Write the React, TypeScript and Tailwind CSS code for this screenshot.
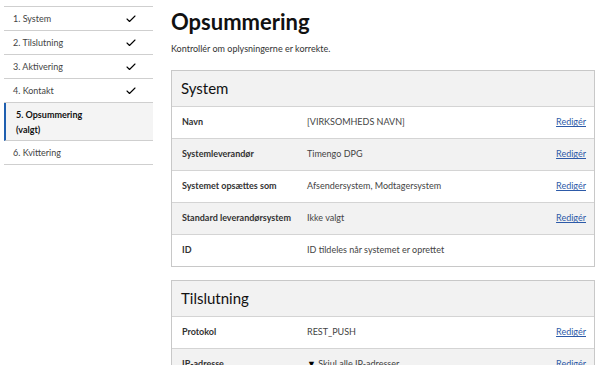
import { Check } from "lucide-react";

const steps = [
  { label: "1. System", done: true },
  { label: "2. Tilslutning", done: true },
  { label: "3. Aktivering", done: true },
  { label: "4. Kontakt", done: true },
];

const systemRows = [
  { label: "Navn", value: "[VIRKSOMHEDS NAVN]", edit: true },
  { label: "Systemleverandør", value: "Timengo DPG", edit: true },
  { label: "Systemet opsættes som", value: "Afsendersystem, Modtagersystem", edit: true },
  { label: "Standard leverandørsystem", value: "Ikke valgt", edit: true },
  { label: "ID", value: "ID tildeles når systemet er oprettet", edit: false },
];

function Row({
  label,
  children,
  edit,
  shaded,
}: {
  label: string;
  children: React.ReactNode;
  edit: boolean;
  shaded: boolean;
}) {
  return (
    <div
      className={`flex h-[32px] items-center border-t border-[#d4d4d4] pl-[10px] pr-[8px] text-[9px] ${
        shaded ? "bg-[#f2f2f2]" : "bg-white"
      }`}
    >
      <div className="w-[125px] whitespace-nowrap font-bold text-[#333]">{label}</div>
      <div className="flex-1 whitespace-nowrap text-[#444]">{children}</div>
      {edit && <a className="text-[#2d5aa8] underline">Redigér</a>}
    </div>
  );
}

export default function App() {
  return (
    <div className="flex min-h-screen bg-white font-['Lato',sans-serif] text-[#222]">
      <nav className="ml-[4px] mt-[6px] w-[149px] shrink-0 border-t border-[#cfcfcf]">
        {steps.map((s) => (
          <div
            key={s.label}
            className="flex h-[24px] items-center justify-between border-b border-[#cfcfcf] pl-[9px] pr-[16px] text-[9px] text-[#444]"
          >
            <span>{s.label}</span>
            <Check className="h-[12px] w-[12px] text-black" strokeWidth={2.2} />
          </div>
        ))}
        <div className="flex h-[38px] flex-col justify-center border-b border-l-2 border-[#cfcfcf] border-l-[#1f5fb0] bg-[#f4f4f4] pl-[10px] text-[9px] font-bold leading-[15px] text-[#111]">
          <span>5. Opsummering</span>
          <span>(valgt)</span>
        </div>
        <div className="flex h-[24px] items-center border-b border-[#cfcfcf] pl-[9px] text-[9px] text-[#444]">
          6. Kvittering
        </div>
      </nav>

      <main className="ml-[18px] w-[424px]">
        <h1 className="mt-[8px] text-[22px] font-bold leading-[28px] text-[#111]">
          Opsummering
        </h1>
        <p className="mt-[6px] text-[9px] text-[#333]">
          Kontrollér om oplysningerne er korrekte.
        </p>

        <section className="mt-[14px] border border-[#c8c8c8]">
          <div className="flex h-[35px] items-center bg-[#f2f2f2] pl-[9px] text-[15px] text-[#111]">
            System
          </div>
          {systemRows.map((r, i) => (
            <Row key={r.label} label={r.label} edit={r.edit} shaded={i % 2 === 1}>
              {r.value}
            </Row>
          ))}
        </section>

        <section className="mt-[13px] border border-[#c8c8c8]">
          <div className="flex h-[35px] items-center bg-[#f2f2f2] pl-[9px] text-[15px] text-[#111]">
            Tilslutning
          </div>
          <Row label="Protokol" edit shaded={false}>
            REST_PUSH
          </Row>
          <Row label="IP-adresse" edit shaded>
            <span className="text-[9px] text-black">▼</span> Skjul alle IP-adresser
          </Row>
        </section>
      </main>
    </div>
  );
}
